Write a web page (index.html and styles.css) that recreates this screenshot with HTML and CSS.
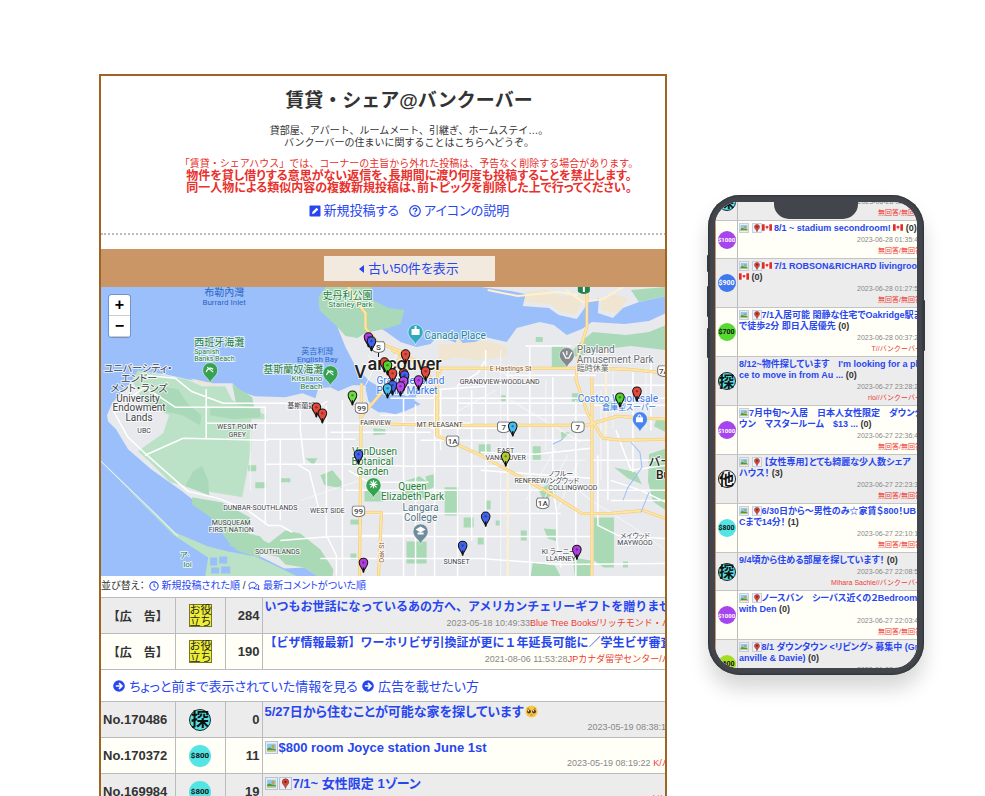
FILE: index.html
```html
<!DOCTYPE html>
<html lang="ja">
<head>
<meta charset="utf-8">
<title>賃貸・シェア@バンクーバー</title>
<link rel="stylesheet" href="styles.css">
</head>
<body>
<svg class="defs" aria-hidden="true">
  <defs>
    <symbol id="pin" viewBox="-6 -16 12 17"><path d="M0 0C-.6-4-4.300-6-4.300-10a4.300 4.300 0 0 1 8.600 0C4.300-6 .6-4 0 0Z" fill="currentColor" stroke="#111" stroke-width="1"/><path d="M0-5V0" stroke="#111" stroke-width="1.500"/><circle cy="-10" r="1.200" fill="#000" opacity=".35"/></symbol>
    <symbol id="poi" viewBox="-9 -10 18 24"><path d="M0 12C-1 7-7.500 5-7.500-1a7.500 7.500 0 0 1 15 0C7.500 5 1 7 0 12Z" fill="currentColor" stroke="#fff" stroke-width=".5"/></symbol>
    <symbol id="shield" viewBox="0 0 14 12"><path d="M2 .7h10l1.300 2v4.500Q13.300 11 7 11.400.7 11 .7 7.200V2.700Z" fill="#fff" stroke="#6f7478" stroke-width="1"/></symbol>
    <symbol id="photo" viewBox="0 0 12 12"><path d="M.5.5h11v11H.5z" fill="#e9edf5" stroke="#b9c2d2"/><path d="M2 2.500h8v7H2z" fill="#8dc7ee"/><path d="M2 7l2-1 2 1 4 .5v2H2z" fill="#4d9a3a"/><circle cx="7.500" cy="5" r="1.500" fill="#c8a437"/><path d="M2 8.500h8v1H2z" fill="#d8c86a"/></symbol>
    <symbol id="place" viewBox="0 0 12 12"><path d="M.5.5h11v11H.5z" fill="#edf0f5" stroke="#b9c2d2"/><path d="M6 10.500C5.700 8 3 7 3 4.700a3 3 0 0 1 6 0C9 7 6.300 8 6 10.500Z" fill="#d9453a" stroke="#7f2d27" stroke-width=".6"/><circle cx="6" cy="4.600" r="1" fill="#5e1815"/></symbol>
    <symbol id="flag" viewBox="0 0 12 8"><path d="M0 0h12v8H0z" fill="#fff"/><path d="M0 0h3.200v8H0zM8.800 0H12v8H8.800zM6 1.300l.7 1.200 1.400.3-.6 1.500-1.200.8v1.300h-.6V5.100l-1.200-.8-.6-1.500 1.400-.3z" fill="#dc2f2c"/></symbol>
    <symbol id="go" viewBox="0 0 14 14"><circle cx="7" cy="7" r="6.800" fill="#2846f0"/><path d="M3.300 7H10M7 3.600 10.400 7 7 10.400" fill="none" stroke="#fff" stroke-width="2"/></symbol>
  </defs>
</svg>

<main class="stage">
  <section class="desktop">
    <div class="page">
      <header class="intro">
        <h1>賃貸・シェア@バンクーバー</h1>
        <p class="lead">貸部屋、アパート、ルームメート、引継ぎ、ホームステイ…。<br>バンクーバーの住まいに関することはこちらへどうぞ。</p>
        <p class="notice">「賃貸・シェアハウス」では、コーナーの主旨から外れた投稿は、予告なく削除する場合があります。<strong>物件を貸し借りする意思がない返信を、長期間に渡り何度も投稿することを禁止します。<br>同一人物による類似内容の複数新規投稿は、前トピックを削除した上で行ってください。</strong></p>
        <nav class="actions">
          <a href="#new"><svg class="ico" viewBox="0 0 12 12"><rect x=".5" y=".5" width="11" height="11" rx="1" fill="#2846f0"/><path d="M3 9l.5-2.200L7.600 2.700l1.700 1.700-4.100 4.100z" fill="#fff"/></svg>新規投稿する</a>
          <a href="#help"><svg class="ico" viewBox="0 0 12 12"><circle cx="6" cy="6" r="5.300" fill="none" stroke="#2846f0" stroke-width="1.200"/><path d="M4.200 4.700C4.300 2.600 7.800 2.600 7.800 4.600 7.800 5.800 6 5.800 6 7.200M6 8.200v1.300" fill="none" stroke="#2846f0" stroke-width="1.400"/></svg>アイコンの説明</a>
        </nav>
      </header>

      <div class="pager"><a href="#older"><svg class="tri" viewBox="0 0 5 8"><path d="M5 0v8L0 4z" fill="#2846f0"/></svg>古い50件を表示</a></div>

      <div class="map">
        <svg class="canvas" viewBox="101 287 564 289" preserveAspectRatio="xMinYMin slice" role="img" aria-label="Vancouver">
          <path class="water" d="M101 287h564v289H101z"/>
          <path class="land" d="M107 415l5-12 8-9 8-9 20-13 17 2 27 6 20 3h20l10 10 13 3 30 1 17-4 13 5 3-10 12-1 8 4 14-6 12 0 8 10-2 12 8 5 24 0 18-8-13-8-22-6-16-9-14-15-10-19-8-20 6-6 20-2 20 11 17 12 16 5 14-3 7-8 22 8 14-1 11-6 22 5 10-14 23-6 14 3 13 10 15-6 10-7 33 2 24-3 17-8V576H318l-14-9-20 1-22-11-24-7-10-10-23-31-23-18-31-22-23-20-12-20-8-8z"/>
          <path class="sand" d="M190 378l22 5 4 3-16-2zM240 391l14 5-8 0zM438 345l17-2 2-6 5 6 22-2 22 5 1 10-30 4-22-3-17 6zM485 345l17 0 5 8-20 5z"/>
          <path class="land" d="M480 287h185v9l-27 6-16 6-10 10-15-5 1-15-10 4-12 17-18-4-10-7-26-2 3-12-15-3z"/>
          <path class="sand" d="M525 292l20-3 15 8 25-3-10 20-15-2-10-8-26-2zM600 298l12-4 15 5-10 14-16-3z"/>
          <path class="park" d="M325 287h47l-4 11 20 10 16 2-4 14-12 4-23 5-8 5-12-2-9-10-17-16-1-13zM630 290l35-3v9l-27 6zM582 340l10-8 33 3 23-3 17-7v25l-35-4-25 3-27 7-14 2z"/>
          <path class="wood" d="M162 375l24 4 16 7 23 0 7 14 34 15v4h-15v30l-9 48-30-5-42-10-21-21-11-10 25-18 6-18-25-13-12-22 6-10z"/>
          <path class="park" d="M160 386l18 3 9 14 14 12-1 10-18-10-18-4-14-15zM232 384l20 13 2 11-18-4zM193 471l9-5 6 14 1 15-24-9zM192 497l30 5 28 15-2 16 12 3 7 9-8 12-22-7-10-10-15-22-20-14zM210 408h50v9l-28 2-22-4z"/>
          <path class="wood" d="M101 461l47 46 27 25 33 14 20 5 27 5 20 9 22 11h-92l3-19-34-22-30-30z"/>
          <path class="green" d="M285 530l15 3 20 16 13 20-1 7H318l-14-9-19-3-18-20zM228 545l25-10 28 14 5 9-38-8zM551 346h15l1 22h-16zM404 481l15-5 8 6v16l-23-2zM444 487h14v28h-14zM406 541h20v22h-20zM364 490h18v11h-18zM320 475l12-5 10 12v6l-18-3zM305 458l12 0-4 7zM463 517h10v10h-10zM593 517h20v50h-10l-10-7zM648 454l17-6v62l-13-9-5-20zM613 467l22 5 6 12-14-6zM532 562l22 3 6 11h-30zM572 557l18 3-1 16h-15zM543 528l12 1 1 12-9-3zM520 530l6 0v10h-6zM495 520h4v5h-4zM248 465h8v6h-8zM255 482h11v6h-11zM280 478h10v4h-10zM376 458h15v3h-15zM535 337h7v5h-7zM571 393h9v10l-9-2zM598 403l15-2 5 8-12 2zM478 444h12v9h-12zM485 500h5v9h-5zM532 446h8v14h-8zM655 420h10v12l-12-6zM350 519h11v5h-11zM350 553h6v6h-6zM316 565l7-3v9h-7zM538 490l12-8 5 10-12 8zM500 395h5v6h-5zM560 432h9l-8 8zM373 428l12 1v5l-12 1zM425 476l8-2 2 12-8 4zM477 537h6v7h-6zM622 561h5v6h-5z"/>
          <path class="water" d="M365 388l8-4 7 17 12 6 14-9 9-11 3 3-8 18-15 6-15-3-12-10zM210 557h7v8h-7zM219 556h8v7h-8zM211 567h8v6h-8zM221 566h9v7h-9z"/>

          <path class="hair" d="M101 461l55 53 22 22M490 460h95M600 390v90M612 368v60M645 368v60M372 345l36 30M367 355l32 28M385 345l-20 40M397 352l-19 37M300 500l60-20M500 350v230M545 380v70M555 448l-30 52M567 455l-30 55M577 462l-20 47M520 380l-20-8M510 400l70 42M560 475l30 25 40 25 35 25M455 412l40-22M250 430v60"/>
          <path class="minor" d="M134 405l-20 7 14 25 18 17 42 37 30 7 28 11 22 16h12l12 7M145 455l38-17 85 2M145 375l30 3 16 13 32 12h62l36 2 6-4M206 389v50M265 406v118M280 440v80M250 423h220M206 423h50M265 407h-90l-30-20-17 12M265 439h90M265 464h95l45 2h95M297 464l12 7 10 40M300 400v30l4 34M326 405v130l10 20v20M342 400v176M345 490h160M360 513h200M280 540l50-4h260M320 558h160l80 6 105-1M403 398v178M415 404v172M434 393v183M457 385v191M471 390v150M485 350v226M507 370v100M529 347v230M552 377v110l4 25v30l4 25M575 400v176M591 377v199M607 440v60M632 372v100M650 360v70M665 460h-75M591 420v25M390 398h275M458 403h125M380 415h210M430 428h70M440 390v60M420 440h170M480 452l55 2 55-6M480 490h185M610 500h55M525 346h45M526 346v-1M505 375h90M480 470l110 8M457 385l20-12 7-12M425 390l60-4M360 535h60M330 432h100M348 470l20 12h60M593 405h72M593 385h72M597 455v70l20 10 48 3M610 480l30 10 25 12M615 430l15 40 35-5"/>
          <path class="pale" d="M436 385v50M507 465v110M507 490v40M605 350v85M565 290l17 12 20-3 20-12M487 290l30 6 40-4 20 3"/>
          <path class="major-edge" d="M348 287l9 16 8 10v15l12 14 25 10 22 18 12 15v50l40 18 70 38 35 22h28l33-3 28 10 45 23M361 383l-2 193M381 512l-3 64M437 368h150l40 1 38 4M359 423l75 2h152l30-9 30 2 19 1M586 287v40l-8 27-3 25 12 35 15 24 20 2 43-1M591 377v199M402 352l-18 37-24 28M359 512h22v5M391 350l50 22M437 368v67"/>
          <path class="major" d="M348 287l9 16 8 10v15l12 14 25 10 22 18 12 15v50l40 18 70 38 35 22h28l33-3 28 10 45 23M361 383l-2 193M381 512l-3 64M437 368h150l40 1 38 4M359 423l75 2h152l30-9 30 2 19 1M586 287v40l-8 27-3 25 12 35 15 24 20 2 43-1M591 377v199M402 352l-18 37-24 28M359 512h22v5M391 350l50 22M437 368v67"/>
          <path class="creek" d="M622 500l5-13 14-20-2-15-9-10M640 512l8-20M552 444l10-5"/>

          <g class="t blue"><text x="224" y="296" class="s9">布勒內灣</text><text x="224" y="305" class="s8">Burrard Inlet</text><text x="317" y="354" class="s8">英吉利灣</text><text x="317" y="362" class="s8">English Bay</text></g>
          <g class="t forest"><text x="219" y="346" class="s10">西班牙海灘</text><text x="194" y="354" class="s7 start">Spanish</text><text x="194" y="361" class="s7 start">Banks Beach</text><text x="293" y="373" class="s10">基斯蘭奴海灘</text><text x="322" y="381" class="s8 end">Kitsilano</text><text x="322" y="389" class="s8 end">Beach</text><text x="347" y="299" class="s9">史丹利公園</text><text x="350" y="307" class="s8">Stanley Park</text><text x="374" y="455" class="s9">VanDusen</text><text x="372" y="465" class="s9">Botanical</text><text x="372" y="475" class="s9">Garden</text><text x="412" y="490" class="s9">Queen</text><text x="412" y="500" class="s9">Elizabeth Park</text><text x="180" y="558" class="s8 start">ア·</text><text x="183" y="567" class="s8 start">Ioi</text></g>
          <g class="t dark"><text x="138" y="372" class="s10">ユニバーシティ・</text><text x="139" y="382" class="s10">エンドー</text><text x="139" y="392" class="s10">メント・ランズ</text><text x="138" y="402" class="s9">University</text><text x="139" y="411" class="s9">Endowment</text><text x="139" y="421" class="s9">Lands</text><text x="144" y="433" class="s6">UBC</text><text x="237" y="429" class="s6">WEST POINT</text><text x="237" y="437" class="s6">GREY</text><text x="301" y="408" class="s6">基斯蘭奴</text><text x="375" y="425" class="s6">FAIRVIEW</text><text x="439" y="427" class="s6">MT PLEASANT</text><text x="499" y="384" class="s6">GRANDVIEW-WOODLAND</text><text x="505" y="453" class="s6">EAST</text><text x="505" y="460" class="s6">VANCOUVER</text><text x="560" y="476" class="s7">ノフルー</text><text x="546" y="483" class="s6">RENFREW/ングウッド</text><text x="572" y="490" class="s6">COLLINGWOOD</text><text x="260" y="510" class="s6">DUNBAR-SOUTHLANDS</text><text x="327" y="513" class="s6">WEST SIDE</text><text x="231" y="525" class="s6">MUSQUEAM</text><text x="231" y="532" class="s6">FIRST NATION</text><text x="277" y="554" class="s6">SOUTHLANDS</text><text x="456" y="564" class="s6">SUNSET</text><text x="634" y="538" class="s7">メイウッド</text><text x="634" y="545" class="s6">MAYWOOD</text><text x="558" y="554" class="s6">KI ラーニー</text><text x="560" y="561" class="s6">LLARNEY</text></g>
          <g class="t city"><text x="354" y="378" class="s17 start">V</text><text x="367" y="370" class="s17 start">ancouver</text><text x="648" y="466" class="s12 start">バーナビー</text><text x="655" y="479" class="s12 start">Burnaby</text></g>
          <g class="t azure"><text x="376" y="384" class="s9 start">Granville Island</text><text x="376" y="394" class="s9 start">Public Market</text><text x="577" y="402" class="s9 start">Costco Wholesale</text><text x="601" y="410" class="s8 start">倉庫型スーパー</text></g>
          <g class="t teal"><text x="424" y="339" class="s9 start">Canada Place</text></g>
          <g class="t grey"><text x="576" y="353" class="s9 start">Playland</text><text x="576" y="363" class="s9 start">Amusement Park</text><text x="576" y="371" class="s8 start">臨時休業</text></g>
          <g class="t slate"><text x="420" y="511" class="s9">Langara</text><text x="420" y="521" class="s9">College</text></g>
          <g class="t brown"><text x="510" y="371" class="s7">E Hastings St</text><text transform="translate(383 552) rotate(-90)" class="s7">Oak St</text></g>

          <g class="poi"><use href="#poi" x="201" y="361" width="18" height="24" color="#35a24f"/><use href="#poi" x="321" y="364" width="18" height="24" color="#35a24f"/><use href="#poi" x="406" y="323" width="18" height="24" color="#2fa9bd"/><use href="#poi" x="557" y="346" width="18" height="24" color="#85898e"/><use href="#poi" x="630" y="410" width="18" height="24" color="#4a84f0"/><use href="#poi" x="364" y="476" width="18" height="24" color="#35a24f"/><use href="#poi" x="411" y="522" width="18" height="24" color="#6f8c9c"/></g>
          <path d="M206 372q2-6 7-3M207 367l6 5M326 375q2-6 7-3M327 370l6 5M369 484h8M373 480v8M370 481l6 6M376 481l-6 6M562 352l3 6h3l3-6M566 351v4" class="mark"/>
          <path d="M411 329h8v6h-8zM414 326h2v3h-2zM635 417h7v5h-7zM415 529l5-3 5 3-5 3zM417 532h6v2h-6z" fill="#fff"/><path d="M637 417v-1q1.500-3 3 0v1" class="mark"/>
          <g class="route"><use href="#shield" x="354" y="402" width="14" height="12"/><text x="361" y="411">99</text><use href="#shield" x="351" y="505" width="14" height="12"/><text x="358" y="514">99</text><use href="#shield" x="445" y="435" width="14" height="12"/><text x="452" y="444">1A</text><use href="#shield" x="535" y="497" width="14" height="12"/><text x="542" y="506">1A</text><use href="#shield" x="496" y="421" width="14" height="12"/><text x="503" y="430">7</text><use href="#shield" x="570" y="421" width="14" height="12"/><text x="577" y="430">7</text><use href="#shield" x="656" y="365" width="14" height="12"/><text x="663" y="374">7A</text><use href="#shield" x="371" y="341" width="14" height="12"/><text x="378" y="350">S</text></g>
          <path d="M577 287h12v4q0 2-6 3-6-1-6-3z" fill="#23824d"/><path d="M583 287v5" stroke="#fff" stroke-width="2"/><path d="M378 353v4" stroke="#111"/>

          <g class="pins">
            <use href="#pin" x="362" y="331" width="12" height="17" color="#b03ddf"/><use href="#pin" x="365" y="335" width="12" height="17" color="#4262ee"/>
            <use href="#pin" x="399" y="348" width="12" height="17" color="#e4493e"/><use href="#pin" x="378" y="356" width="12" height="17" color="#e4493e"/><use href="#pin" x="381" y="359" width="12" height="17" color="#54d22e"/><use href="#pin" x="386" y="367" width="12" height="17" color="#e4493e"/><use href="#pin" x="397" y="367" width="12" height="17" color="#e4493e"/><use href="#pin" x="398" y="369" width="12" height="17" color="#4262ee"/><use href="#pin" x="419" y="365" width="12" height="17" color="#e4493e"/><use href="#pin" x="412" y="374" width="12" height="17" color="#b84aea"/><use href="#pin" x="397" y="375" width="12" height="17" color="#b84aea"/><use href="#pin" x="386" y="379" width="12" height="17" color="#4262ee"/><use href="#pin" x="394" y="380" width="12" height="17" color="#b84aea"/><use href="#pin" x="381" y="382" width="12" height="17" color="#45bdf0"/>
            <use href="#pin" x="346" y="389" width="12" height="17" color="#6bdc42"/><use href="#pin" x="310" y="401" width="12" height="17" color="#e4493e"/><use href="#pin" x="316" y="407" width="12" height="17" color="#e4493e"/><use href="#pin" x="630" y="385" width="12" height="17" color="#e4493e"/><use href="#pin" x="613" y="391" width="12" height="17" color="#54d22e"/><use href="#pin" x="506" y="420" width="12" height="17" color="#45bdf0"/><use href="#pin" x="352" y="448" width="12" height="17" color="#4262ee"/><use href="#pin" x="499" y="450" width="12" height="17" color="#b6ca32"/><use href="#pin" x="479" y="510" width="12" height="17" color="#4262ee"/><use href="#pin" x="456" y="539" width="12" height="17" color="#4262ee"/><use href="#pin" x="357" y="556" width="12" height="17" color="#b03ddf"/><use href="#pin" x="570" y="543" width="12" height="17" color="#b03ddf"/>
          </g>
        </svg>
        <div class="zoomer"><button type="button" aria-label="Zoom in">+</button><button type="button" aria-label="Zoom out">−</button></div>
      </div>

      <p class="sort">並び替え：<a href="#new-first"><svg class="ico-s" viewBox="0 0 12 12"><circle cx="6" cy="6" r="5" fill="none" stroke="#2846f0" stroke-width="1.300"/><path d="M6 3v3l2 1.500" fill="none" stroke="#2846f0" stroke-width="1.200"/></svg> 新規投稿された順</a> / <a href="#commented"><svg class="ico-w" viewBox="0 0 14 12"><path d="M1 9.500Q2.200 8.500 2 7.500C-.5 5 1.500 1.500 5.500 1.500S11 5.500 8.500 7.300Q6.500 8.700 4 8.100 2.500 9.500 1 9.500ZM11 4q3 1.800 1.200 4.300.1 1.200 1 2-1.800 0-2.700-1-2.500.5-4-.6" fill="none" stroke="#2846f0" stroke-width="1.200"/></svg> 最新コメントがついた順</a></p>

      <table class="posts">
        <colgroup><col class="c-no"><col class="c-icon"><col class="c-count"><col></colgroup>
        <tbody>
          <tr class="alt sponsor"><th scope="row">【広　告】</th><td class="mid"><span class="useful">お役<br>立ち</span></td><td class="num">284</td><td class="body"><a href="#p1">いつもお世話になっているあの方へ、アメリカンチェリーギフトを贈りませんか</a><small>2023-05-18 10:49:33<em>Blue Tree Books/リッチモンド・バンクーバー</em></small></td></tr>
          <tr class="sponsor"><th scope="row">【広　告】</th><td class="mid"><span class="useful">お役<br>立ち</span></td><td class="num">190</td><td class="body"><a href="#p2">【ビザ情報最新】ワーホリビザ引換証が更に１年延長可能に／学生ビザ審査</a><small>2021-08-06 11:53:28<em>JPカナダ留学センター/バンクーバー</em></small></td></tr>
          <tr class="more"><td colspan="4"><a href="#recent"><svg class="ico" aria-hidden="true"><use href="#go"/></svg>ちょっと前まで表示されていた情報を見る</a><a href="#ads"><svg class="ico" aria-hidden="true"><use href="#go"/></svg>広告を載せたい方</a></td></tr>
          <tr class="alt"><th scope="row">No.170486</th><td class="mid"><span class="kanji">探</span></td><td class="num">0</td><td class="body"><a href="#p3">5/27日から住むことが可能な家を探しています<svg class="face" viewBox="0 0 14 14" role="img" aria-label="うるうる顔"><circle cx="7" cy="7" r="6.500" fill="#f7c846"/><circle cx="4.300" cy="7" r="2.100" fill="#59351c"/><circle cx="9.700" cy="7" r="2.100" fill="#59351c"/><circle cx="3.700" cy="6.300" r=".8" fill="#fff"/><circle cx="9.100" cy="6.300" r=".8" fill="#fff"/><path d="M5.700 11q1.300-1.200 2.600 0M2.300 4.200l2-1M11.700 4.200l-2-1" fill="none" stroke="#8c5a20" stroke-width=".8"/></svg></a><small>2023-05-19 08:38:12 <em>Vancouver</em></small></td></tr>
          <tr><th scope="row">No.170372</th><td class="mid"><span class="price">$800</span></td><td class="num">11</td><td class="body"><a href="#p4"><svg class="pic" aria-hidden="true"><use href="#photo"/></svg>$800 room Joyce station June 1st</a><small>2023-05-19 08:19:22 <em>K/バンクーバー</em></small></td></tr>
          <tr class="alt"><th scope="row">No.169984</th><td class="mid"><span class="price">$800</span></td><td class="num">19</td><td class="body"><a href="#p5"><svg class="pic" aria-hidden="true"><use href="#photo"/></svg><svg class="pic" aria-hidden="true"><use href="#place"/></svg>7/1~ 女性限定 1ゾーン</a><small>2023-05-18 23:18:40 <em>Saki/バンクーバー</em></small></td></tr>
        </tbody>
      </table>
    </div>
  </section>

  <section class="phone">
    <i class="key k1"></i><i class="key k2"></i><i class="key k3"></i><i class="key k4"></i>
    <div class="screen">
      <ul class="feed">
        <li class="alt"><span class="badge"><b class="kanji">探</b></span><div><a href="#m0">部屋を探しています</a> (0)<small>2023-06-28 02:11:05<em>無回答/無回答</em></small></div></li>
        <li><span class="badge"><b class="price violet">$1000</b></span><div><a href="#m1"><svg class="pic"><use href="#photo"/></svg> <svg class="pic"><use href="#place"/></svg><svg class="flag"><use href="#flag"/></svg> 8/1 ~ stadium secondroom! <svg class="flag"><use href="#flag"/></svg></a> (0)<small>2023-06-28 01:35:42<em>無回答/無回答</em></small></div></li>
        <li class="alt"><span class="badge"><b class="price blue">$900</b></span><div><a href="#m2"><svg class="pic"><use href="#photo"/></svg> <svg class="pic"><use href="#place"/></svg><svg class="flag"><use href="#flag"/></svg> 7/1 ROBSON&amp;RICHARD livingroom<br><svg class="flag"><use href="#flag"/></svg></a> (0)<small>2023-06-28 01:27:51<em>無回答/無回答</em></small></div></li>
        <li><span class="badge"><b class="price green">$700</b></span><div><a href="#m3"><svg class="pic"><use href="#photo"/></svg> <svg class="pic"><use href="#place"/></svg>7/1入居可能 閑静な住宅でOakridge駅ま<br>で徒歩2分 即日入居優先</a> (0)<small>2023-06-28 00:37:20<em>T//バンクーバー</em></small></div></li>
        <li class="alt"><span class="badge"><b class="kanji">探</b></span><div><a href="#m4">8/12~物件探しています　I'm looking for a pla<br>ce to move in from Au ...</a> (0)<small>2023-06-27 23:28:24<em>rio//バンクーバー</em></small></div></li>
        <li><span class="badge"><b class="price violet">$1000</b></span><div><a href="#m5"><svg class="pic"><use href="#photo"/></svg>7月中旬～入居　日本人女性限定　ダウンタ<br>ウン　マスタールーム　$13 ...</a> (0)<small>2023-06-27 22:36:45<em>無回答/無回答</em></small></div></li>
        <li class="alt"><span class="badge"><b class="kanji plain">他</b></span><div><a href="#m6"><svg class="pic"><use href="#photo"/></svg> <svg class="pic"><use href="#place"/></svg> 【女性専用】とても綺麗な少人数シェア<br>ハウス！</a> (3)<small>2023-06-27 22:23:38<em>無回答/無回答</em></small></div></li>
        <li><span class="badge"><b class="price">$800</b></span><div><a href="#m7"><svg class="pic"><use href="#photo"/></svg> <svg class="pic"><use href="#place"/></svg>6/30日から～男性のみ☆家賃＄800！UB<br>Cまで14分！</a> (1)<small>2023-06-27 22:10:16<em>無回答/無回答</em></small></div></li>
        <li class="alt"><span class="badge"><b class="kanji">探</b></span><div><a href="#m8">9/4頃から住める部屋を探しています！</a> (0)<small>2023-06-27 22:08:54<em>Mihara Sachie//バンクーバー</em></small></div></li>
        <li><span class="badge"><b class="price violet">$1000</b></span><div><a href="#m9"><svg class="pic"><use href="#photo"/></svg> <svg class="pic"><use href="#place"/></svg>ノースバン　シーバス近くの２Bedroom<br>with Den</a> (0)<small>2023-06-27 22:03:41<em>無回答/無回答</em></small></div></li>
        <li class="alt"><span class="badge"><b class="price lime">$600</b></span><div><a href="#m10"><svg class="pic"><use href="#photo"/></svg> <svg class="pic"><use href="#place"/></svg>8/1 ダウンタウン &lt;リビング&gt; 募集中 (Gr<br>anville &amp; Davie)</a> (0)<small>2023-06-27 21:58:12<em>無回答/無回答</em></small></div></li>
      </ul>
      <span class="notch"></span>
    </div>
  </section>
</main>
</body>
</html>
```
FILE: styles.css
```css
* { box-sizing: border-box; }

body {
  margin: 0;
  background: #fff;
  color: #333;
  font-family: "Liberation Sans", "Noto Sans CJK JP", sans-serif;
  font-feature-settings: "palt";
}

a { color: #2846f0; text-decoration: none; }
h1, p, ul { margin: 0; padding: 0; }
.defs { position: absolute; width: 0; height: 0; }

.stage {
  display: grid;
  grid-template-columns: minmax(0, 71fr) minmax(0, 27fr);
  column-gap: 41px;
  align-items: start;
  height: 100vh;
  padding: 74px 61px 0 99px;
  overflow: hidden;
}

/* Desktop view */
.desktop {
  border: 2px solid #9c6522;
  overflow: hidden;
}
.page { width: calc(100% + 52px); }

.intro {
  padding: 15px 0 14px;
  text-align: center;
  border-bottom: 2px dotted #bbb;
}
h1, .lead, .notice, small { font-feature-settings: normal; }
h1 { font-size: 19px; line-height: 20px; }
.lead { margin-top: 14px; font-size: 10px; line-height: 12px; }
.notice { margin-top: 9px; color: #e8302c; font-size: 10px; line-height: 12px; }
.notice strong { display: block; font-size: 12px; font-feature-settings: "palt"; }
.actions {
  display: flex;
  justify-content: center;
  gap: 10px;
  margin-top: 9px;
  font-size: 13px;
  line-height: 16px;
}
.actions a { display: flex; align-items: center; gap: 3px; }
.ico { width: 12px; height: 12px; }

.pager {
  display: flex;
  justify-content: center;
  margin-top: 14px;
  padding: 7px 0 6px;
  background: #ca9665;
}
.pager a {
  display: flex;
  align-items: center;
  justify-content: center;
  gap: 4px;
  width: 171px;
  background: #f2eadf;
  font-size: 13px;
  line-height: 25px;
}
.tri { width: 5px; height: 8px; }

.map { position: relative; height: 289px; overflow: hidden; }
.canvas { display: block; width: 565px; height: 289px; }
.zoomer {
  position: absolute;
  top: 8px;
  left: 8px;
  display: grid;
  border-radius: 3px;
  box-shadow: 0 0 0 1px rgba(60, 80, 120, .4);
  overflow: hidden;
}
.zoomer button {
  width: 21px;
  height: 21px;
  padding: 0;
  border: 0;
  border-bottom: 1px solid #ccc;
  background: #fff;
  color: #000;
  font: bold 16px/20px "Liberation Sans", sans-serif;
}

.water { fill: #9bbffb; }
.land { fill: #e8e9ed; }
.sand { fill: #f0e5d1; }
.park { fill: #a9d9b8; }
.wood { fill: #bbe2c6; }
.green { fill: #a9d9b5; }
.hair, .minor, .pale, .major, .major-edge, .creek, .mark { fill: none; stroke-linejoin: round; }
.hair { stroke: #f8f9fa; stroke-width: 1; opacity: .8; }
.minor { stroke: #fff; stroke-width: 1.500; }
.pale { stroke: #fdf1d2; stroke-width: 2; }
.major-edge { stroke: #f5c76a; stroke-width: 3; }
.major { stroke: #fde5a6; stroke-width: 2; }
.creek { stroke: #9bbffb; stroke-width: 1; }
.mark { stroke: #fff; stroke-width: 1.200; }

.t {
  font-family: Roboto, "Noto Sans CJK JP", sans-serif;
  text-anchor: middle;
  paint-order: stroke;
  stroke: #fff;
  stroke-width: 2px;
  stroke-opacity: .75;
  stroke-linejoin: round;
}
.start { text-anchor: start; }
.end { text-anchor: end; }
.s6 { font-size: 7px; }
.s7 { font-size: 7px; }
.s8 { font-size: 8px; }
.s9 { font-size: 10px; }
.s10 { font-size: 10px; }
.s12 { font-size: 12px; font-weight: 500; }
.s17 { font-size: 18px; font-weight: 500; }
.t.blue { fill: #2c66c4; stroke-width: 0; }
.t.forest { fill: #27813d; }
.t.dark { fill: #3f4347; }
.t.city { fill: #222; }
.t.azure { fill: #3978e6; }
.t.teal { fill: #15859b; }
.t.grey { fill: #6b7075; }
.t.slate { fill: #557584; }
.t.brown { fill: #8a5b33; }
.route text {
  font: 500 8px Roboto, sans-serif;
  text-anchor: middle;
  fill: #444;
}

.sort { height: 21px; font-size: 10px; line-height: 20px; }
.ico-s { width: 10px; height: 10px; margin-left: 4px; vertical-align: -2px; }
.ico-w { width: 12px; height: 10px; vertical-align: -2px; }

.posts { width: 100%; table-layout: fixed; border-collapse: collapse; }
.c-no { width: 74px; }
.c-icon { width: 50px; }
.c-count { width: 37px; }
.posts tr { height: 36px; background: #fffff8; }
.posts tr.alt, .feed li.alt { background: #ececec; }
.posts tr.more { height: 32px; background: #fff; }
.posts th, .posts td {
  padding: 0 2px;
  border: 1px solid #bbb;
  border-left-width: 0;
  white-space: nowrap;
}
.posts th { font-size: 13px; text-align: left; }
.posts .mid { text-align: center; }
.posts .num { font-size: 13px; font-weight: bold; text-align: right; }
.posts .body { padding: 0; vertical-align: top; }
.body a {
  display: flex;
  align-items: center;
  column-gap: 1px;
  padding-left: 2px;
  font-size: 13px;
  font-weight: bold;
  line-height: 19px;
}
.sponsor th, .posts .sponsor a { font-size: 12px; font-feature-settings: normal; }
.posts .sponsor th { text-align: center; }
.body small { line-height: 12px; font-size: 9px; }
small { display: block; color: #888; text-align: right; }
em { color: #ec3b36; font-style: normal; }
.pic { width: 13px; height: 13px; }
.face { width: 13px; height: 13px; }
.posts .more td { padding: 0 12px; font-size: 13px; }
.more a { display: inline-flex; align-items: center; gap: 4px; margin-right: 4px; }

.useful {
  display: inline-block;
  width: 23px;
  height: 23px;
  border: 1px solid #77772b;
  background: #eeee35;
  color: #222;
  font-size: 11px;
  line-height: 11px;
  font-feature-settings: normal;
  vertical-align: middle;
}
.kanji, .price {
  display: inline-grid;
  place-items: center;
  width: 22px;
  height: 22px;
  border-radius: 50%;
  background: #53e4e4;
  color: #111;
  font-weight: bold;
  vertical-align: middle;
}
.kanji { border: 1px solid #222; font-size: 18px; line-height: 18px; }
.kanji.plain { background: #fff; }
.price { font-family: Roboto, sans-serif; font-size: 8px; }
.price.violet { background: #a645ee; color: #fff; }
.price.blue { background: #4079ee; color: #fff; }
.price.green { background: #56d931; }
.price.lime { background: #a5dd25; }

/* Phone view */
.phone {
  position: relative;
  height: 480px;
  margin-top: 121px;
  padding: 7px;
  border-radius: 32px;
  background: #42464c;
  box-shadow: inset 0 0 2px 1px #2f3338, 0 14px 20px rgba(0, 0, 0, .16);
}
.screen {
  position: relative;
  height: 100%;
  border-radius: 24px;
  background: #fff;
  overflow: hidden;
}
.notch {
  position: absolute;
  top: 0;
  left: 29%;
  width: 42%;
  height: 17px;
  border-radius: 0 0 15px 15px;
  background: #42464c;
}
.key {
  position: absolute;
  left: -1px;
  width: 3px;
  border-radius: 1px;
  background: #36393e;
}
.k1 { top: 60px; height: 17px; }
.k2 { top: 91px; height: 31px; }
.k3 { top: 133px; height: 30px; }
.k4 { top: 105px; right: -1px; left: auto; height: 51px; }

.feed { width: calc(100% + 5px); margin-top: -19px; list-style: none; border-left: 1px solid #ca9665; }
.feed li {
  display: grid;
  grid-template-columns: 21px minmax(0, 1fr);
  background: #fffff8;
  border-bottom: 1px solid #c4c4c4;
}
.feed li > div {
  padding: 2px 0 2px 1px;
  border-left: 1px solid #bbb;
  font-size: 9px;
  font-weight: bold;
  line-height: 11px;
  white-space: nowrap;
}
.badge { display: grid; place-items: center; }
.feed .kanji, .feed .price { width: 18px; height: 18px; }
.feed .kanji { font-size: 15px; line-height: 15px; }
.feed .price { font-size: 7px; }
.feed .violet { font-size: 6px; }
.feed small { font-size: 7px; font-weight: normal; }
.feed em { display: block; }
.feed .pic { width: 10px; height: 10px; vertical-align: -2px; }
.feed .flag { width: 10px; height: 7px; vertical-align: 0; }
```
